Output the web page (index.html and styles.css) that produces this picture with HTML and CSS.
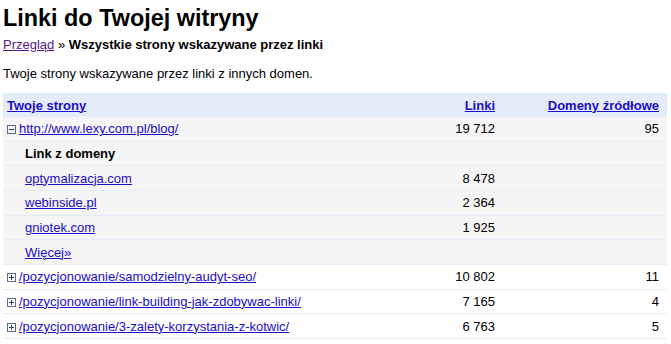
FILE: index.html
```html
<!DOCTYPE html>
<html lang="pl">
<head>
  <meta charset="UTF-8" />
  <title>Linki do Twojej witryny</title>
  <link rel="stylesheet" href="styles.css">
</head>
<body>

  <h1 class="title">Linki do Twojej witryny</h1>
  <div class="crumbs"><a href="#" class="visited">Przegląd</a> &raquo; <b>Wszystkie strony wskazywane przez linki</b></div>
  <p class="intro">Twoje strony wskazywane przez linki z innych domen.</p>

  <table class="links">
    <thead>
      <tr>
        <th class="page"><a href="#">Twoje strony</a></th>
        <th class="num"><a href="#">Linki</a></th>
        <th class="num"><a href="#">Domeny źródłowe</a></th>
      </tr>
    </thead>
    <tbody>
      <tr class="open">
        <td class="page"><span class="toggle minus"></span><a href="#">http://www.lexy.com.pl/blog/</a></td>
        <td class="num">19 712</td>
        <td class="num">95</td>
      </tr>
      <tr class="open sub">
        <td class="page"><b>Link z domeny</b></td>
        <td></td>
        <td></td>
      </tr>
      <tr class="open sub">
        <td class="page"><a href="#">optymalizacja.com</a></td>
        <td class="num">8 478</td>
        <td></td>
      </tr>
      <tr class="open sub">
        <td class="page"><a href="#">webinside.pl</a></td>
        <td class="num">2 364</td>
        <td></td>
      </tr>
      <tr class="open sub">
        <td class="page"><a href="#">gniotek.com</a></td>
        <td class="num">1 925</td>
        <td></td>
      </tr>
      <tr class="open sub">
        <td class="page"><a href="#">Więcej»</a></td>
        <td></td>
        <td></td>
      </tr>
      <tr>
        <td class="page"><span class="toggle plus"></span><a href="#">/pozycjonowanie/samodzielny-audyt-seo/</a></td>
        <td class="num">10 802</td>
        <td class="num">11</td>
      </tr>
      <tr>
        <td class="page"><span class="toggle plus"></span><a href="#">/pozycjonowanie/link-building-jak-zdobywac-linki/</a></td>
        <td class="num">7 165</td>
        <td class="num">4</td>
      </tr>
      <tr>
        <td class="page"><span class="toggle plus"></span><a href="#">/pozycjonowanie/3-zalety-korzystania-z-kotwic/</a></td>
        <td class="num">6 763</td>
        <td class="num">5</td>
      </tr>
    </tbody>
  </table>

</body>
</html>
```

FILE: styles.css
```css
html, body {
  margin: 0;
  padding: 0;
  background: white;
  color: black;
  font-family: Arial, "Liberation Sans", sans-serif;
  font-size: 13px;
}

body {
  padding: 0 4px 0 3px;
}

a {
  color: #1a0dcc;
}

a.visited {
  color: #551a8b;
}

.title {
  font-size: 23.4px;
  font-weight: bold;
  margin: 3px 0 0 0;
  line-height: 30px;
}

.crumbs {
  margin-top: 4px;
  line-height: 16px;
}

.intro {
  margin: 13px 0 11px 0;
  line-height: 16px;
}

.links {
  width: 100%;
  border-collapse: collapse;
}

.links th {
  background: #e5ecf9;
  font-weight: bold;
  height: 24px;
  padding: 0 8px 0 4px;
  text-align: left;
}

.links th.num {
  text-align: right;
}

.links td {
  height: 23.67px;
  padding: 0 8px 0 4px;
  border-bottom: 1px solid #e5ecf9;
}

.links td.num {
  text-align: right;
  width: 150px;
}

.links th:nth-child(2), .links td:nth-child(2) {
  width: 140px;
  padding-right: 10px;
}

.links tr.open td {
  background: #f5f5f5;
}

.links tr.sub td.page {
  padding-left: 22px;
}

.toggle {
  display: inline-block;
  width: 7px;
  height: 7px;
  border: 1px solid #5a6b8c;
  margin: 0 3px 0 0;
  position: relative;
  vertical-align: -1px;
}

.toggle::before, .toggle.plus::after {
  content: "";
  position: absolute;
  background: #29417a;
}

.toggle::before {
  left: 1px;
  top: 3px;
  width: 5px;
  height: 1px;
}

.toggle.plus::after {
  left: 3px;
  top: 1px;
  width: 1px;
  height: 5px;
}
```
